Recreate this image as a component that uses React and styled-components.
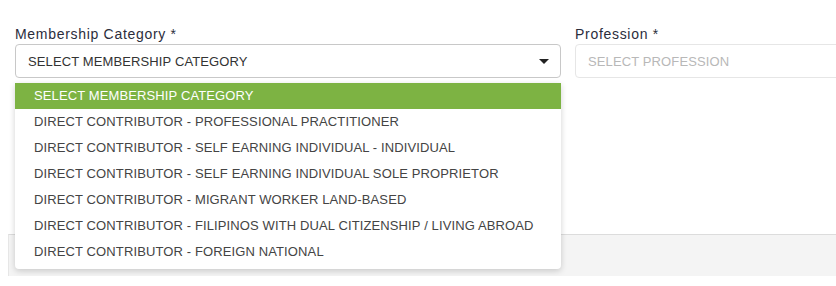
import styled, { createGlobalStyle } from 'styled-components';

const GlobalStyle = createGlobalStyle`
  body {
    margin: 0;
    background: #fff;
    font-family: "Liberation Sans", Arial, sans-serif;
    overflow: hidden;
  }
`

const Root = styled.div`
  padding: 26px 0 0 15px;
  width: 836px;
  box-sizing: border-box;
`
const Row = styled.div`
  display: grid;
  grid-template-columns: 546px 300px;
  column-gap: 14px;
`
const Field = styled.div`
  position: relative;
`
const Label = styled.div`
  font-size: 14px;
  line-height: 17px;
  letter-spacing: 0.7px;
  color: #2b2d3c;
  margin-bottom: 1px;
`
const SelectBox = styled.div`
  height: 34px;
  box-sizing: border-box;
  border: 1px solid ${(p) => (p.$disabled ? '#e6e6e6' : '#c8c8c8')};
  border-radius: 4px;
  display: flex;
  align-items: center;
  justify-content: space-between;
  padding: 0 11px 0 12px;
  font-size: 13px;
  letter-spacing: 0.12px;
  color: ${(p) => (p.$disabled ? '#b8b8b8' : '#333')};
  background: #fff;
`
const Caret = styled.span`
  width: 0;
  height: 0;
  border-left: 5px solid transparent;
  border-right: 5px solid transparent;
  border-top: 5px solid #222;
`
const Menu = styled.ul`
  position: absolute;
  left: 0;
  right: 0;
  top: calc(100% + 5px);
  margin: 0;
  padding: 0 0 4px;
  list-style: none;
  background: #fff;
  border-radius: 0 0 4px 4px;
  box-shadow: 0 2px 6px rgba(0, 0, 0, 0.18);
  z-index: 5;
`
const Option = styled.li`
  height: 26px;
  line-height: 26px;
  padding-left: 19px;
  font-size: 13px;
  letter-spacing: 0.12px;
  color: ${(p) => (p.$active ? '#fff' : '#444')};
  background: ${(p) => (p.$active ? '#7db343' : 'transparent')};
`
const Panel = styled.div`
  margin: 156px 0 0 -7px;
  height: 41px;
  background: #f4f4f4;
  border-top: 1px solid #dcdcdc;
  border-left: 1px solid #e6e6e6;
`

const options = [
  'SELECT MEMBERSHIP CATEGORY',
  'DIRECT CONTRIBUTOR - PROFESSIONAL PRACTITIONER',
  'DIRECT CONTRIBUTOR - SELF EARNING INDIVIDUAL - INDIVIDUAL',
  'DIRECT CONTRIBUTOR - SELF EARNING INDIVIDUAL SOLE PROPRIETOR',
  'DIRECT CONTRIBUTOR - MIGRANT WORKER LAND-BASED',
  'DIRECT CONTRIBUTOR - FILIPINOS WITH DUAL CITIZENSHIP / LIVING ABROAD',
  'DIRECT CONTRIBUTOR - FOREIGN NATIONAL',
]

export default function App() {
  return (
    <Root>
      <GlobalStyle />
      <Row>
        <Field>
          <Label>Membership Category *</Label>
          <SelectBox>
            SELECT MEMBERSHIP CATEGORY
            <Caret />
          </SelectBox>
          <Menu>
            {options.map((o, i) => (
              <Option key={o} $active={i === 0}>{o}</Option>
            ))}
          </Menu>
        </Field>
        <Field>
          <Label>Profession *</Label>
          <SelectBox $disabled>SELECT PROFESSION</SelectBox>
        </Field>
      </Row>
      <Panel />
    </Root>
  )
}
